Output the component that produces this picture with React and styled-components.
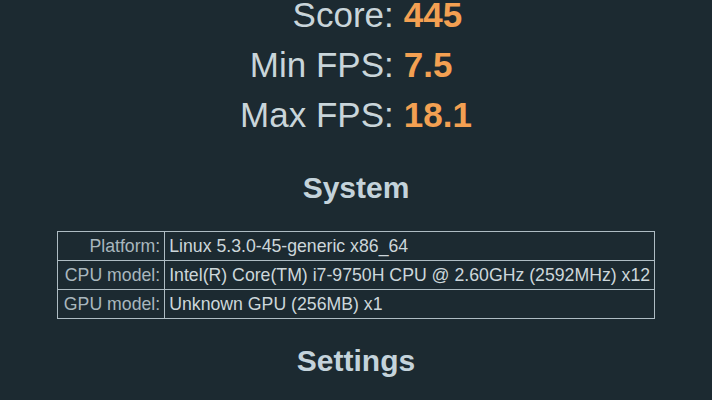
import styled, { createGlobalStyle } from "styled-components";

const GlobalStyle = createGlobalStyle`
  html, body {
    margin: 0;
    padding: 0;
    background: #1c2a31;
    height: 100%;
    overflow: hidden;
  }
  body {
    font-family: "Liberation Sans", Arial, sans-serif;
    color: #c9d5da;
  }
`;

const Page = styled.div`
  width: 712px;
  height: 400px;
  overflow: hidden;
`;

const Content = styled.div`
  margin-top: -10px;
  display: flex;
  flex-direction: column;
  align-items: center;
`;

const Stats = styled.div`
  display: grid;
  grid-template-columns: auto auto;
  column-gap: 10px;
  justify-content: center;
  font-size: 35px;
  line-height: 50px;
`;

const StatLabel = styled.div`
  text-align: right;
  color: #c9d5da;
`;

const StatValue = styled.div`
  font-weight: bold;
  color: #f3a052;
`;

const Heading = styled.h2`
  margin: ${(p) => p.$top}px 0 0;
  font-size: 30px;
  font-weight: bold;
  line-height: 34px;
  color: #c4d3db;
`;

const InfoTable = styled.table`
  margin-top: 26px;
  width: 597px;
  border-collapse: collapse;
  font-size: 17.7px;
  border: 1px solid #aebcc3;
`;

const Cell = styled.td`
  border: 1px solid #aebcc3;
  height: 28px;
  padding: 0 4px 0 ${(p) => (p.$label ? 6 : 4)}px;
  text-align: ${(p) => (p.$label ? "right" : "left")};
  white-space: nowrap;
  color: ${(p) => (p.$label ? "#a9b7be" : "#cdd7db")};
  width: ${(p) => (p.$label ? "1%" : "auto")};
`;

const stats = [
  ["Score:", "445"],
  ["Min FPS:", "7.5"],
  ["Max FPS:", "18.1"],
];

const system = [
  ["Platform:", "Linux 5.3.0-45-generic x86_64"],
  ["CPU model:", "Intel(R) Core(TM) i7-9750H CPU @ 2.60GHz (2592MHz) x12"],
  ["GPU model:", "Unknown GPU (256MB) x1"],
];

export default function App() {
  return (
    <Page>
      <GlobalStyle />
      <Content>
        <Stats>
          {stats.map(([label, value]) => (
            <>
              <StatLabel key={label}>{label}</StatLabel>
              <StatValue key={label + "v"}>{value}</StatValue>
            </>
          ))}
        </Stats>
        <Heading $top={31}>System</Heading>
        <InfoTable>
          <tbody>
            {system.map(([label, value]) => (
              <tr key={label}>
                <Cell $label>{label}</Cell>
                <Cell>{value}</Cell>
              </tr>
            ))}
          </tbody>
        </InfoTable>
        <Heading $top={25}>Settings</Heading>
      </Content>
    </Page>
  );
}
